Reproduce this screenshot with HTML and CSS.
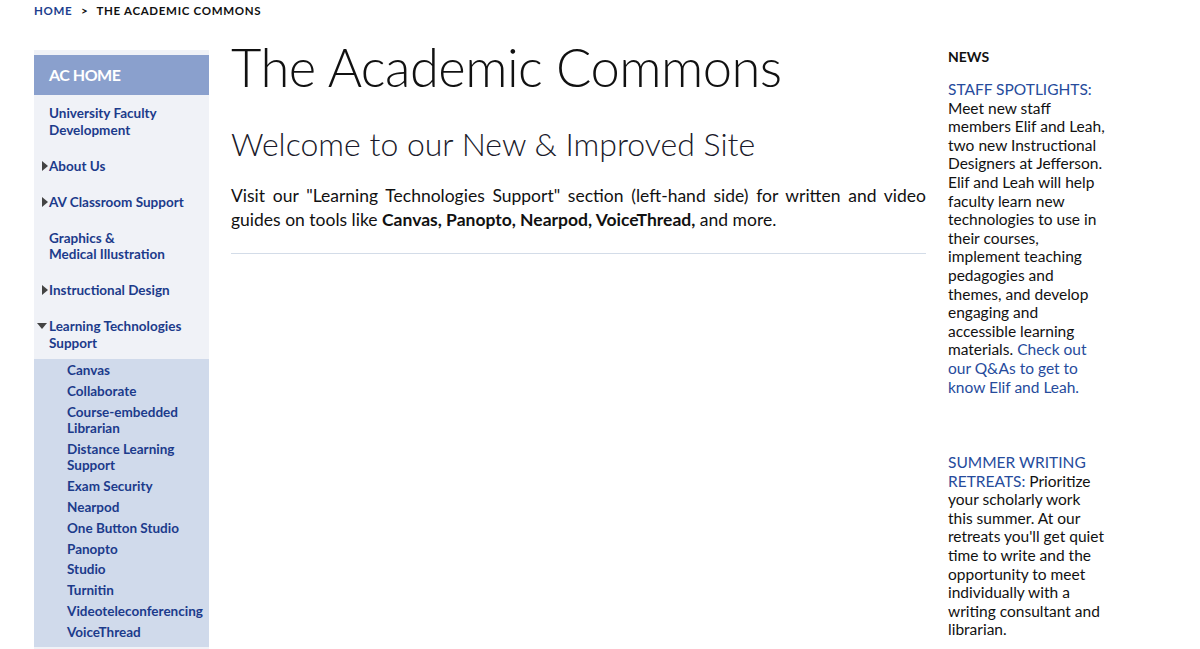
FILE: index.html
```html
<!DOCTYPE html>
<html lang="en">
<head>
    <meta charset="utf-8"/>
    <title>The Academic Commons</title>
    <link rel="stylesheet" href="styles.css">
</head>
<body>
    <div class="crumbs">
        <a href="#" class="crumbLink">Home</a>
        <span class="crumbSep">&gt;</span>
        <span>The Academic Commons</span>
    </div>

    <div class="page">
        <div class="sidebar">
            <div class="sideHead">AC HOME</div>
            <ul class="sideList">
                <li><a href="#">University Faculty Development</a></li>
                <li class="closed"><a href="#">About Us</a></li>
                <li class="closed"><a href="#">AV Classroom Support</a></li>
                <li><a href="#">Graphics &amp;<br>Medical Illustration</a></li>
                <li class="closed"><a href="#">Instructional Design</a></li>
                <li class="open"><a href="#">Learning Technologies Support</a></li>
            </ul>
            <ul class="subList">
                <li><a href="#">Canvas</a></li>
                <li><a href="#">Collaborate</a></li>
                <li><a href="#">Course-embedded Librarian</a></li>
                <li><a href="#">Distance Learning Support</a></li>
                <li><a href="#">Exam Security</a></li>
                <li><a href="#">Nearpod</a></li>
                <li><a href="#">One Button Studio</a></li>
                <li><a href="#">Panopto</a></li>
                <li><a href="#">Studio</a></li>
                <li><a href="#">Turnitin</a></li>
                <li><a href="#">Videoteleconferencing</a></li>
                <li><a href="#">VoiceThread</a></li>
            </ul>
        </div>

        <div class="main">
            <h1 class="title">The Academic Commons</h1>
            <h2 class="subtitle">Welcome to our New &amp; Improved Site</h2>
            <p class="intro">Visit our "Learning Technologies Support" section (left-hand side) for written and video guides on tools like <b>Canvas, Panopto, Nearpod, VoiceThread,</b> and more.</p>
            <hr class="rule">
        </div>

        <div class="news">
            <h3 class="newsHead">NEWS</h3>
            <p class="newsItem"><a href="#">STAFF SPOTLIGHTS:</a> Meet new staff members Elif and Leah, two new Instructional Designers at Jefferson. Elif and Leah will help faculty learn new technologies to use in their courses, implement teaching pedagogies and themes, and develop engaging and accessible learning materials. <a href="#">Check out our Q&amp;As to get to know Elif and Leah.</a></p>
            <p class="newsItem second"><a href="#">SUMMER WRITING RETREATS:</a> Prioritize your scholarly work this summer. At our retreats you'll get quiet time to write and the opportunity to meet individually with a writing consultant and librarian.</p>
        </div>
    </div>
</body>
</html>
```

FILE: styles.css
```css
body
{
    margin: 0;
    font-family: Lato, "Open Sans", sans-serif;
    color: #111;
    background: #fff;
}

a
{
    text-decoration: none;
}

.crumbs
{
    padding: 4px 0 0 34px;
    height: 20px;
    font-size: 11.5px;
    font-weight: bold;
    letter-spacing: 0.06em;
    text-transform: uppercase;
    color: #111;
}

.crumbLink
{
    color: #1d3e8e;
}

.crumbSep
{
    margin: 0 5px;
}

.page
{
    display: flex;
    align-items: flex-start;
    padding-left: 34px;
    margin-top: 26px;
}

.sidebar
{
    width: 175px;
    flex: none;
    background: #f0f2f7;
    padding: 5px 0 7px;
}

.sideHead
{
    background: #8aa0cd;
    color: #fff;
    font-weight: bold;
    font-size: 16px;
    letter-spacing: -0.03em;
    height: 40px;
    line-height: 40px;
    padding-left: 15px;
}

.sideList, .subList
{
    list-style-type: none;
    margin: 0;
    padding: 0;
}

.sideList
{
    padding: 10px 0 0;
}

.sideList li
{
    position: relative;
    padding: 0 14px 0 15px;
    font-size: 13.5px;
    line-height: 16.5px;
    margin-bottom: 19.5px;
    font-weight: bold;
}

.sideList li:last-child
{
    margin-bottom: 8px;
}

.sideList a, .subList a
{
    color: #1c3b8b;
}

.closed::before
{
    content: "";
    position: absolute;
    left: 8px;
    top: 3px;
    border-left: 6px solid #444;
    border-top: 5px solid transparent;
    border-bottom: 5px solid transparent;
}

.open::before
{
    content: "";
    position: absolute;
    left: 3px;
    top: 5px;
    border-top: 6px solid #444;
    border-left: 5.5px solid transparent;
    border-right: 5.5px solid transparent;
}

.subList
{
    background: #d0daeb;
    padding: 3px 0 2px;
}

.subList li
{
    padding: 0 6px 0 33px;
    font-size: 13.5px;
    line-height: 16.5px;
    font-weight: bold;
    margin-bottom: 4.3px;
}

.main
{
    width: 695px;
    flex: none;
    margin-left: 22px;
}

.title
{
    margin: -19px 0 0;
    font-size: 52.5px;
    font-weight: 300;
    line-height: 72px;
    letter-spacing: -0.01em;
    color: #111;
}

.subtitle
{
    margin: 21px 0 0;
    font-size: 32px;
    font-weight: 300;
    line-height: 40px;
    color: #1a1a2a;
}

.intro
{
    margin: 20px 0 0;
    font-size: 17.5px;
    line-height: 24px;
    text-align: justify;
    color: #111;
}

.rule
{
    margin: 21px 0 0;
    border: none;
    border-top: 1.5px solid #d3dce8;
}

.news
{
    width: 160px;
    flex: none;
    margin-left: 22px;
}

.newsHead
{
    margin: -2px 0 0;
    font-size: 14px;
    font-weight: bold;
    line-height: 18px;
}

.newsItem
{
    margin: 14px 0 0;
    font-size: 15.5px;
    line-height: 18.6px;
}

.newsItem a
{
    color: #264b9c;
}

.second
{
    margin-top: 57px;
}
```
